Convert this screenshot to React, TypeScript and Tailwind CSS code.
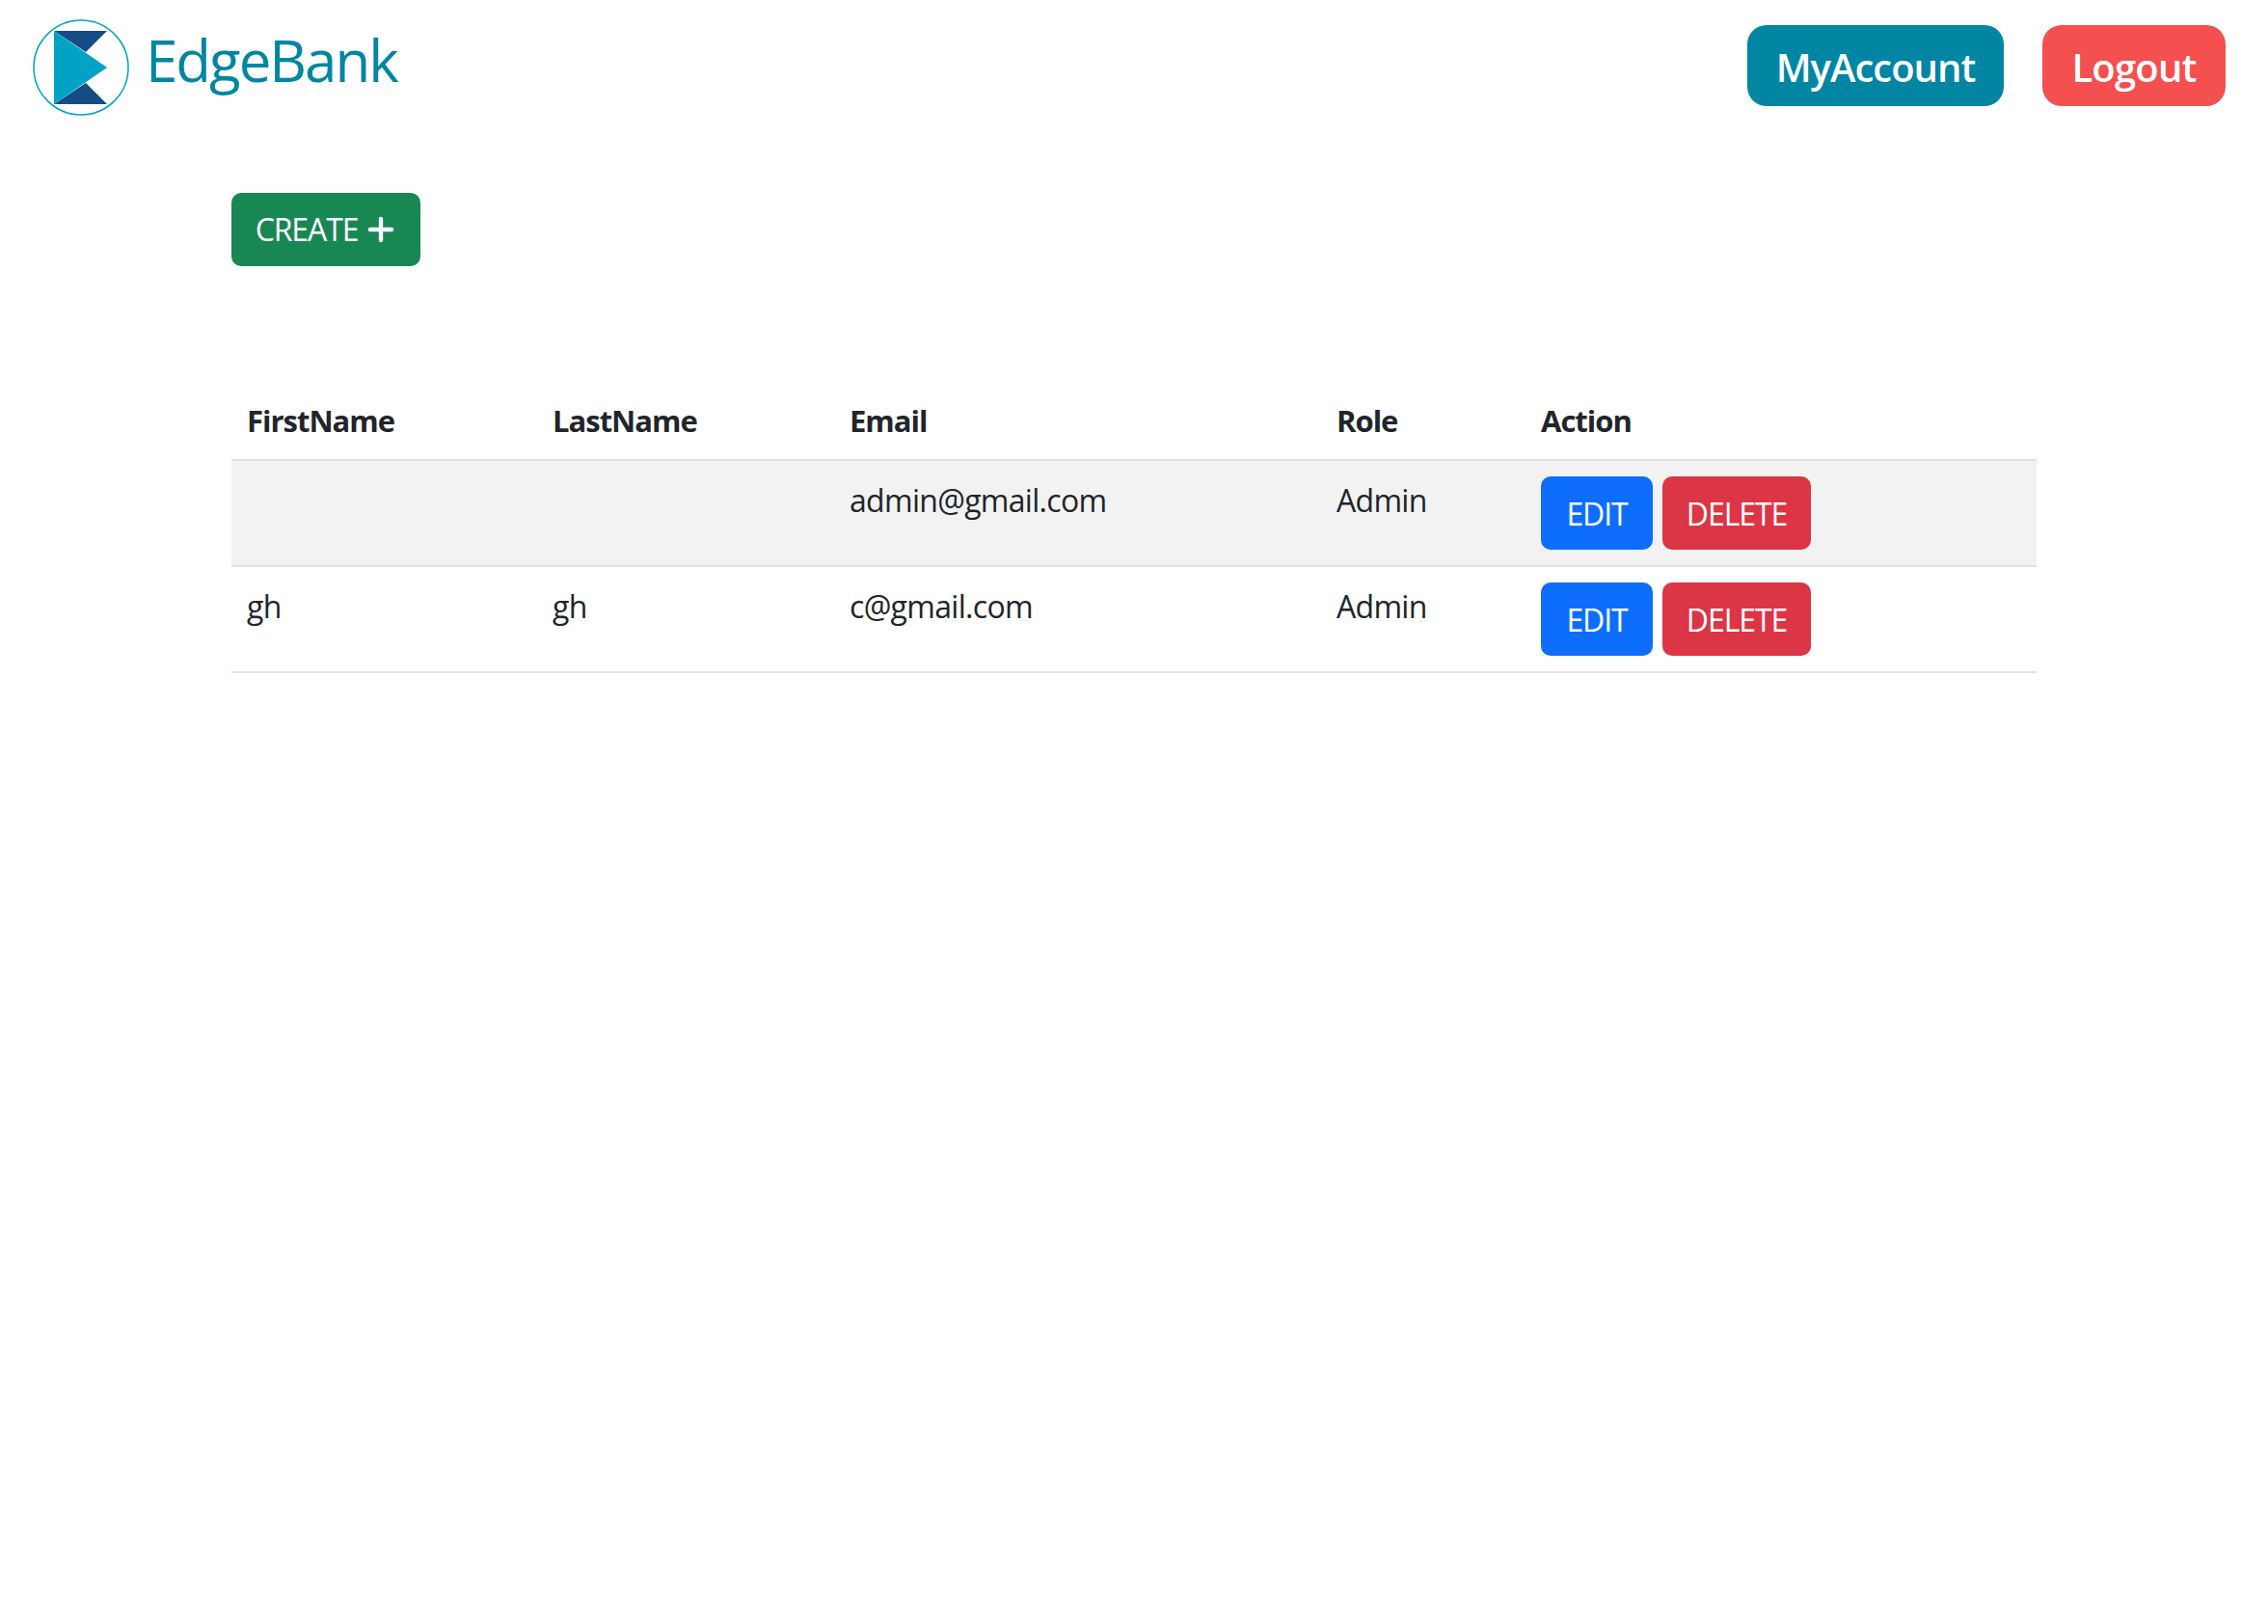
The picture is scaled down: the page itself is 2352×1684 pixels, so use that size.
import { Plus } from 'lucide-react'

const USERS = [
  { firstName: '', lastName: '', email: 'admin@gmail.com', role: 'Admin' },
  { firstName: 'gh', lastName: 'gh', email: 'c@gmail.com', role: 'Admin' },
]

function Logo() {
  return (
    <svg width="100" height="100" viewBox="0 0 100 100" className="shrink-0">
      <circle cx="50" cy="50" r="49" fill="#fff" stroke="#00a3c4" strokeWidth="1.5" />
      <polygon points="22,12 77,12 55,34" fill="#154c85" />
      <polygon points="22,88 55,66 77,88" fill="#154c85" />
      <polygon points="22,12 77,50 22,88" fill="#00a3c4" />
    </svg>
  )
}

function TableButton({ label, color, width }: { label: string; color: string; width: string }) {
  return (
    <button className={`h-[76px] rounded-[10px] pt-[1px] text-[32px] font-normal tracking-[-1.1px] text-white ${width} ${color}`}>
      {label}
    </button>
  )
}

export default function App() {
  return (
    <div className="min-h-[1684px] bg-white font-['Open_Sans','Noto_Sans',sans-serif] text-[#212529]">
      <header className="flex items-start justify-between pl-[34px] pr-[44px] pt-[20px]">
        <div className="flex items-start gap-[17px]">
          <Logo />
          <span className="text-[60px] leading-[85px] font-normal tracking-[-2px] text-[#0086a3]">EdgeBank</span>
        </div>
        <div className="flex gap-[40px] pt-[6px]">
          <button className="h-[84px] w-[266px] rounded-[20px] bg-[#0086a3] pt-[3px] text-[40px] font-semibold tracking-[-1px] text-white">
            MyAccount
          </button>
          <button className="h-[84px] w-[190px] rounded-[20px] bg-[#f55050] pt-[3px] text-[40px] font-semibold tracking-[-0.8px] text-white">
            Logout
          </button>
        </div>
      </header>

      <main className="px-[240px] pt-[80px]">
        <button className="flex h-[76px] w-[196px] items-center justify-center gap-[5px] rounded-[10px] bg-[#198754] pl-[3px] text-[32px] font-normal tracking-[-1.1px] text-white">
          CREATE
          <Plus size={38} strokeWidth={2.75} />
        </button>

        <table className="mt-[120px] w-[1872px] table-fixed border-collapse text-left text-[31px]">
          <colgroup>
            <col className="w-[317px]" />
            <col className="w-[308px]" />
            <col className="w-[505px]" />
            <col className="w-[212px]" />
            <col className="w-[530px]" />
          </colgroup>
          <thead>
            <tr className="h-[81px] border-b-2 border-[#dee2e6]">
              {['FirstName', 'LastName', 'Email', 'Role', 'Action'].map((h) => (
                <th key={h} className="px-[16px] font-bold tracking-[-1px]">
                  {h}
                </th>
              ))}
            </tr>
          </thead>
          <tbody>
            {USERS.map((u, i) => (
              <tr key={u.email} className={`border-b-2 border-[#dee2e6] ${i === 0 ? 'bg-[#f2f2f2]' : ''}`}>
                <td className="px-[16px] pt-[17px] pb-[15px] align-top text-[32px] font-normal leading-[48px] tracking-[-0.7px]">{u.firstName}</td>
                <td className="px-[16px] pt-[17px] pb-[15px] align-top text-[32px] font-normal leading-[48px] tracking-[-0.7px]">{u.lastName}</td>
                <td className="px-[16px] pt-[17px] pb-[15px] align-top text-[32px] font-normal leading-[48px] tracking-[-0.7px]">{u.email}</td>
                <td className="px-[16px] pt-[17px] pb-[15px] align-top text-[32px] font-normal leading-[48px] tracking-[-0.7px]">{u.role}</td>
                <td className="p-[16px] align-top">
                  <div className="flex gap-[10px]">
                    <TableButton label="EDIT" color="bg-[#0d6efd]" width="w-[116px]" />
                    <TableButton label="DELETE" color="bg-[#dc3545]" width="w-[154px]" />
                  </div>
                </td>
              </tr>
            ))}
          </tbody>
        </table>
      </main>
    </div>
  )
}
